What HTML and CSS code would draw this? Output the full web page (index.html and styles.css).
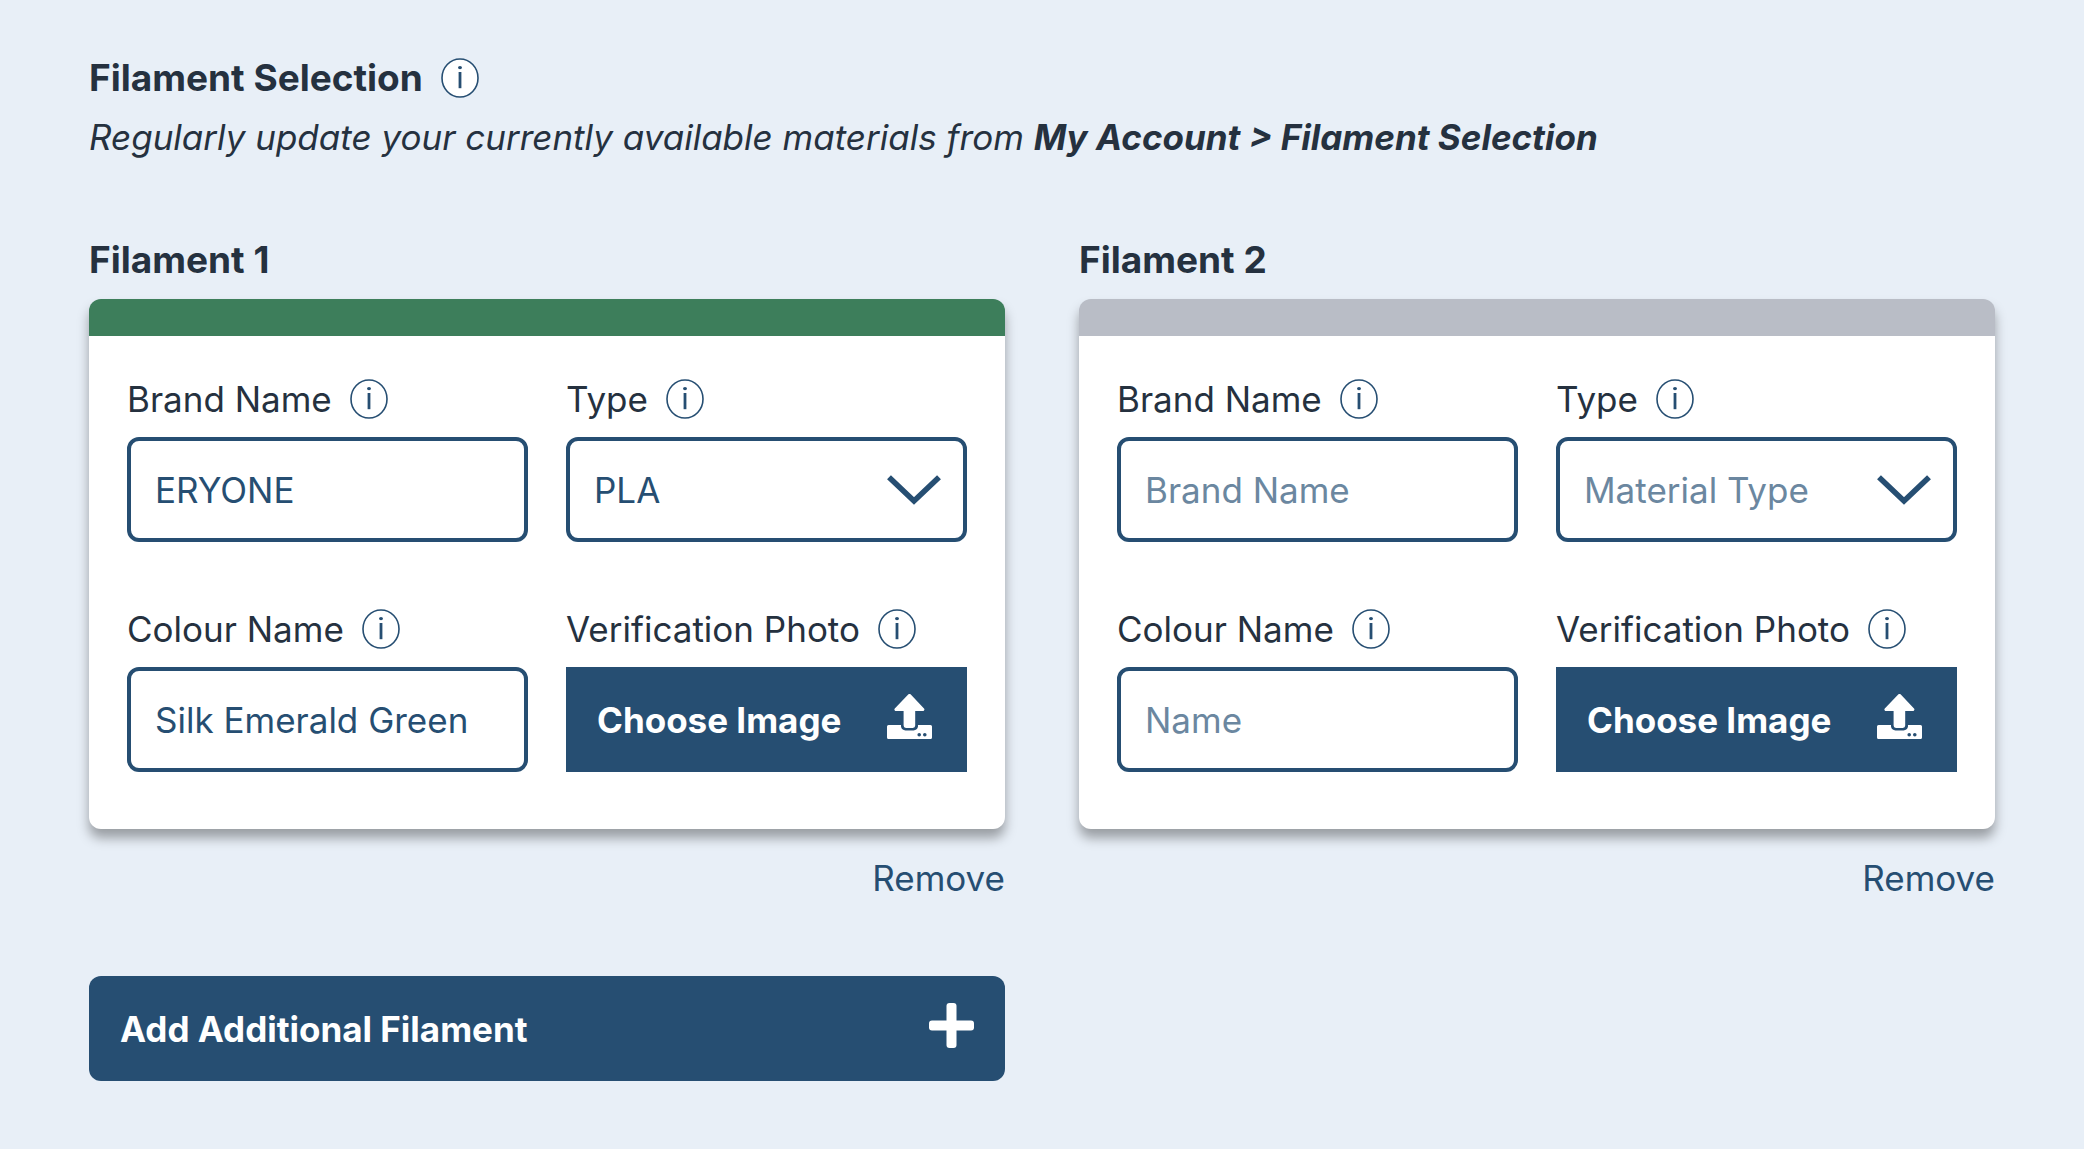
FILE: index.html
```
<!DOCTYPE html>
<html lang="en">
<head>
<meta charset="utf-8">
<meta name="viewport" content="width=device-width, initial-scale=1">
<title>Filament Selection</title>
<link rel="stylesheet" href="styles.css">
</head>
<body>
<svg class="sprite" aria-hidden="true">
  <symbol id="info" viewBox="0 0 38 40">
    <ellipse cx="19" cy="20" rx="18" ry="19" fill="#fff" stroke="currentColor" stroke-width="1.6"/>
    <ellipse cx="19" cy="9.6" rx="2" ry="1.6" fill="currentColor"/>
    <rect x="17.6" y="14" width="2.8" height="16.2" fill="currentColor"/>
  </symbol>
  <symbol id="chevron" viewBox="0 0 54 30">
    <path d="M2 2.2 27 26 52 2.2" fill="none" stroke="currentColor" stroke-width="5.6"/>
  </symbol>
  <symbol id="upload" viewBox="0 0 45 45">
    <path fill="currentColor" fill-rule="evenodd" d="M21.200.6a1.700 1.700 0 0 1 2.600 0L37 14.400c.9 1 .3 2.600-1.200 2.600H28.200V31.600a2.400 2.400 0 0 1-2.400 2.400H19a2.400 2.400 0 0 1-2.400-2.400V17H9c-1.500 0-2.100-1.600-1.200-2.600ZM1.500 31H14v1.600a4.600 4.600 0 0 0 4.600 3.800h7.800a4.600 4.600 0 0 0 4.600-3.800V31H43.500A1.500 1.500 0 0 1 45 32.500v11A1.500 1.500 0 0 1 43.500 45h-42A1.500 1.500 0 0 1 0 43.500v-11A1.500 1.500 0 0 1 1.500 31ZM32.200 38.900a1.800 1.800 0 1 0 0 3.600 1.800 1.800 0 0 0 0-3.600Zm5.600 0a1.800 1.800 0 1 0 0 3.600 1.800 1.800 0 0 0 0-3.600Z"/>
  </symbol>
  <symbol id="plus" viewBox="0 0 45 45">
    <rect x="17.500" y="0" width="10" height="45" rx="3" fill="currentColor"/>
    <rect x="0" y="17.500" width="45" height="10" rx="3" fill="currentColor"/>
  </symbol>
</svg>

<main class="page">
  <header class="intro">
    <div class="label-row">
      <h1 class="title">Filament Selection</h1>
      <button class="info" type="button" aria-label="About filament selection"><svg><use href="#info"/></svg></button>
    </div>
    <p class="hint">Regularly update your currently available materials from <strong>My Account &gt; Filament Selection</strong></p>
  </header>

  <form class="filaments">
    <section class="filament">
      <h2 class="title">Filament 1</h2>
      <div class="card card-green">
        <div class="field">
          <div class="label-row">
            <label for="brand1">Brand Name</label>
            <button class="info" type="button" aria-label="About brand name"><svg><use href="#info"/></svg></button>
          </div>
          <input class="control" id="brand1" type="text" placeholder="Brand Name" value="ERYONE">
        </div>
        <div class="field">
          <div class="label-row">
            <label for="type1">Type</label>
            <button class="info" type="button" aria-label="About type"><svg><use href="#info"/></svg></button>
          </div>
          <div class="select">
            <select class="control" id="type1"><option>PLA</option></select>
            <svg class="chevron"><use href="#chevron"/></svg>
          </div>
        </div>
        <div class="field">
          <div class="label-row">
            <label for="colour1">Colour Name</label>
            <button class="info" type="button" aria-label="About colour name"><svg><use href="#info"/></svg></button>
          </div>
          <input class="control" id="colour1" type="text" placeholder="Name" value="Silk Emerald Green">
        </div>
        <div class="field">
          <div class="label-row">
            <label for="photo1">Verification Photo</label>
            <button class="info" type="button" aria-label="About verification photo"><svg><use href="#info"/></svg></button>
          </div>
          <button class="action choose" id="photo1" type="button">Choose Image <svg class="icon"><use href="#upload"/></svg></button>
        </div>
      </div>
      <a class="remove" href="#">Remove</a>
    </section>

    <section class="filament">
      <h2 class="title">Filament 2</h2>
      <div class="card">
        <div class="field">
          <div class="label-row">
            <label for="brand2">Brand Name</label>
            <button class="info" type="button" aria-label="About brand name"><svg><use href="#info"/></svg></button>
          </div>
          <input class="control" id="brand2" type="text" placeholder="Brand Name">
        </div>
        <div class="field">
          <div class="label-row">
            <label for="type2">Type</label>
            <button class="info" type="button" aria-label="About type"><svg><use href="#info"/></svg></button>
          </div>
          <div class="select">
            <select class="control control-empty" id="type2"><option>Material Type</option></select>
            <svg class="chevron"><use href="#chevron"/></svg>
          </div>
        </div>
        <div class="field">
          <div class="label-row">
            <label for="colour2">Colour Name</label>
            <button class="info" type="button" aria-label="About colour name"><svg><use href="#info"/></svg></button>
          </div>
          <input class="control" id="colour2" type="text" placeholder="Name">
        </div>
        <div class="field">
          <div class="label-row">
            <label for="photo2">Verification Photo</label>
            <button class="info" type="button" aria-label="About verification photo"><svg><use href="#info"/></svg></button>
          </div>
          <button class="action choose" id="photo2" type="button">Choose Image <svg class="icon"><use href="#upload"/></svg></button>
        </div>
      </div>
      <a class="remove" href="#">Remove</a>
    </section>

    <button class="action add" type="button">Add Additional Filament <svg class="icon"><use href="#plus"/></svg></button>
  </form>
</main>
</body>
</html>
```
FILE: styles.css
```
:root {
  --ink: #25313f;
  --navy: #264e72;
  --muted: #6b87a0;
}

* { box-sizing: border-box; }

body {
  margin: 0;
  min-height: 100vh;
  background: #e8eff7;
  color: var(--ink);
  font: 400 35px/44px Inter, "Liberation Sans", sans-serif;
}

.sprite { display: none; }
.page { padding: 58px 89px 68px; }

.title {
  margin: 0;
  font-size: 37px;
  font-weight: 700;
  line-height: 42px;
}

.label-row {
  display: flex;
  align-items: center;
  gap: 18px;
  height: 40px;
  white-space: nowrap;
}

.info {
  width: 38px;
  height: 40px;
  padding: 0;
  border: 0;
  background: none;
  color: var(--navy);
}

.info svg {
  display: block;
  width: 100%;
  height: 100%;
}

.hint {
  margin: 17px 0 0;
  font-style: italic;
}

.filaments {
  display: grid;
  grid-template-columns: 1fr 1fr;
  gap: 76px 74px;
  margin-top: 80px;
}

.filament {
  display: flex;
  flex-direction: column;
}

.card {
  display: grid;
  grid-template-columns: 1fr 1fr;
  gap: 67px 38px;
  margin-top: 18px;
  padding: 43px 38px 57px;
  border-top: 37px solid #b9bdc6;
  border-radius: 12px;
  background: #fff;
  box-shadow: 0 9px 12px rgba(0, 0, 0, 0.34);
}

.card-green { border-top-color: #3d7e5b; }

.field {
  display: grid;
  gap: 18px;
  min-width: 0;
}

.control {
  width: 100%;
  height: 105px;
  padding: 0 24px;
  border: 4px solid var(--navy);
  border-radius: 12px;
  background: #fff;
  color: var(--navy);
  font: inherit;
  appearance: none;
}

.control::placeholder {
  color: var(--muted);
  opacity: 1;
}

.control-empty { color: var(--muted); }

.select {
  display: grid;
  align-items: center;
}

.select > * { grid-area: 1 / 1; }

.chevron {
  justify-self: end;
  width: 54px;
  height: 30px;
  margin-right: 26px;
  color: var(--navy);
  pointer-events: none;
}

.action {
  display: flex;
  align-items: center;
  justify-content: space-between;
  height: 105px;
  padding: 0 31px;
  border: 0;
  background: var(--navy);
  color: #fff;
  font: inherit;
  font-weight: 700;
}

.choose { padding-right: 35px; }

.icon {
  width: 45px;
  height: 45px;
  margin-bottom: 6px;
}

.add { border-radius: 12px; }

.remove {
  align-self: flex-end;
  margin-top: 27px;
  color: var(--navy);
  text-decoration: none;
}
```
